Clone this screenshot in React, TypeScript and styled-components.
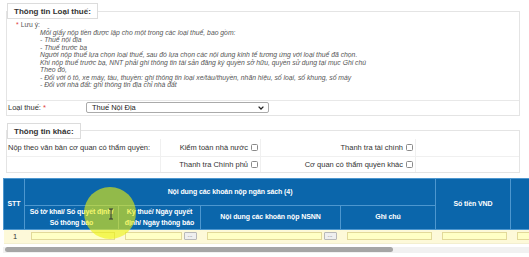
import React from "react";
import styled, { createGlobalStyle } from "styled-components";

const GlobalStyle = createGlobalStyle`
  html, body {
    margin: 0;
    padding: 0;
    background: #ffffff;
  }
  body {
    font-family: "Liberation Sans", Arial, sans-serif;
    color: #333;
  }
  * {
    box-sizing: border-box;
  }
`;

const Page = styled.div`
  position: relative;
  width: 529px;
  height: 257px;
  overflow: hidden;
  padding-top: 3px;
`;

const Fieldset = styled.fieldset<{ $top?: number }>`
  margin: ${(p) => p.$top ?? 0}px 9px 0 6px;
  padding: 0;
  border: 1px solid #e4e4e4;
  min-width: 0;
`;

const Legend = styled.legend`
  margin: 0;
  padding: 0 6px;
  height: 16px;
  line-height: 15px;
  border: 1px solid #dcdcdc;
  background: #fff;
  font-size: 8px;
  font-weight: bold;
  color: #333;
`;

const Note = styled.div`
  padding: 2px 0 11px 9px;
  font-size: 6.8px;
  line-height: 7.5px;
  color: #555;
`;

const Required = styled.span`
  color: #e04040;
  margin-right: 2px;
`;

const NoteList = styled.div`
  margin-left: 24px;
  font-style: italic;
`;

const TaxRow = styled.div`
  display: flex;
  align-items: center;
  height: 15px;
  border-top: 1px solid #e8e8e8;
  font-size: 7.5px;
  color: #333;
`;

const TaxLabel = styled.div`
  width: 79px;
  padding-left: 1px;
`;

const SelectBox = styled.div`
  display: flex;
  align-items: center;
  justify-content: space-between;
  width: 183px;
  height: 11px;
  padding: 0 4px 0 5px;
  border: 1px solid #aaa;
  border-radius: 2px;
  background: #fff;
  font-size: 7.5px;
  color: #222;
`;

const OtherGrid = styled.div`
  display: grid;
  grid-template-columns: 153px 100px 155px 1fr;
  grid-template-rows: 17px 16px;
  font-size: 7.5px;
  color: #333;
`;

const OtherCell = styled.div<{ $right?: boolean; $line?: boolean }>`
  display: flex;
  align-items: center;
  justify-content: ${(p) => (p.$right ? "flex-end" : "flex-start")};
  gap: 3px;
  padding: 0 2px 0 1px;
  border-top: ${(p) => (p.$line ? "1px solid #f0f0f0" : "none")};
  border-left: ${(p) => (p.$right ? "1px solid #f0f0f0" : "none")};
`;

const Check = styled.span`
  display: inline-block;
  width: 7px;
  height: 7px;
  border: 1px solid #8a8a8a;
  border-radius: 1.5px;
  background: #fff;
`;

const TableWrap = styled.div`
  margin: 5px 0 0 3px;
  width: 526px;
  overflow: hidden;
`;

const Table = styled.table`
  border-collapse: collapse;
  table-layout: fixed;
  width: 560px;
`;

const Th = styled.th<{ $h?: number }>`
  height: ${(p) => p.$h ?? 24}px;
  padding: 0;
  background: #0b66ab;
  border: 1px solid #4d97cf;
  color: #fff;
  font-size: 7px;
  letter-spacing: -0.1px;
  line-height: 11.5px;
  font-weight: bold;
  text-align: center;
  vertical-align: middle;
  white-space: nowrap;
`;

const Td = styled.td`
  height: 14px;
  padding: 0 4px 0 6px;
  background: #fdf9d9;
  border-bottom: 1px solid #f3efd0;
  font-size: 7.5px;
  text-align: center;
  vertical-align: middle;
`;

const CellInner = styled.div`
  display: flex;
  align-items: center;
  gap: 2px;
`;

const Field = styled.div`
  flex: 1;
  height: 8px;
  background: #ffffc6;
  border: 1px solid #e2d99a;
`;

const DotsButton = styled.div`
  width: 13px;
  height: 8px;
  border: 1px solid #b8b8b8;
  border-radius: 1px;
  background: #efefef;
  font-size: 6px;
  line-height: 4px;
  color: #555;
  text-align: center;
`;

const ScrollTrack = styled.div`
  margin: 3px 0 0 3px;
  height: 6px;
  background: #f1f1f1;
  padding: 0.5px 0 0 2px;
`;

const ScrollThumb = styled.div`
  width: 388px;
  height: 5px;
  border-radius: 3px;
  background: #a6a6a6;
`;

const CursorHalo = styled.div`
  position: absolute;
  left: 84px;
  top: 187px;
  width: 52px;
  height: 52px;
  border-radius: 50%;
  background: rgba(236, 242, 10, 0.6);
  pointer-events: none;
`;

const IBeam = styled.svg`
  position: absolute;
  left: 108px;
  top: 208px;
`;

const notes = [
  "Mỗi giấy nộp tiền được lập cho một trong các loại thuế, bao gồm:",
  "- Thuế nội địa",
  "- Thuế trước bạ",
  "Người nộp thuế lựa chọn loại thuế, sau đó lựa chọn các nội dung kinh tế tương ứng với loại thuế đã chọn.",
  "Khi nộp thuế trước bạ, NNT phải ghi thông tin tài sản đăng ký quyền sở hữu, quyền sử dụng tại mục Ghi chú",
  "Theo đó,",
  "- Đối với ô tô, xe máy, tàu, thuyền: ghi thông tin loại xe/tàu/thuyền, nhãn hiệu, số loại, số khung, số máy",
  "- Đối với nhà đất: ghi thông tin địa chỉ nhà đất",
];

const cols = [21, 94, 82, 140, 95, 75, 53];

const App = () => {
  return (
    <Page>
      <GlobalStyle />
      <Fieldset>
        <Legend>Thông tin Loại thuế:</Legend>
        <Note>
          <div>
            <Required>*</Required>Lưu ý:
          </div>
          <NoteList>
            {notes.map((n) => (
              <div key={n}>{n}</div>
            ))}
          </NoteList>
        </Note>
        <TaxRow>
          <TaxLabel>
            Loại thuế: <Required>*</Required>
          </TaxLabel>
          <SelectBox>
            <span>Thuế Nội Địa</span>
            <svg width="6" height="4" viewBox="0 0 6 4">
              <path d="M0.6 0.6 L3 3 L5.4 0.6" stroke="#222" strokeWidth="1.3" fill="none" />
            </svg>
          </SelectBox>
        </TaxRow>
      </Fieldset>

      <Fieldset $top={7}>
        <Legend>Thông tin khác:</Legend>
        <OtherGrid>
          <OtherCell>Nộp theo văn bản cơ quan có thẩm quyền:</OtherCell>
          <OtherCell $right>
            Kiểm toán nhà nước <Check />
          </OtherCell>
          <OtherCell $right>
            Thanh tra tài chính <Check />
          </OtherCell>
          <OtherCell $right />
          <OtherCell $line />
          <OtherCell $right $line>
            Thanh tra Chính phủ <Check />
          </OtherCell>
          <OtherCell $right $line>
            Cơ quan có thẩm quyền khác <Check />
          </OtherCell>
          <OtherCell $right $line />
        </OtherGrid>
      </Fieldset>

      <TableWrap>
        <Table>
          <colgroup>
            {cols.map((w, i) => (
              <col key={i} style={{ width: w }} />
            ))}
          </colgroup>
          <thead>
            <tr>
              <Th rowSpan={2}>STT</Th>
              <Th colSpan={4} $h={27}>
                Nội dung các khoản nộp ngân sách (4)
              </Th>
              <Th rowSpan={2}>Số tiền VND</Th>
              <Th rowSpan={2} />
            </tr>
            <tr>
              <Th>
                Số tờ khai/ Số quyết định/
                <br />
                Số thông báo
              </Th>
              <Th>
                Kỳ thuế/ Ngày quyết
                <br />
                định/ Ngày thông báo
              </Th>
              <Th>Nội dung các khoản nộp NSNN</Th>
              <Th>Ghi chú</Th>
            </tr>
          </thead>
          <tbody>
            <tr>
              <Td>1</Td>
              <Td>
                <CellInner>
                  <Field />
                </CellInner>
              </Td>
              <Td>
                <CellInner>
                  <Field />
                  <DotsButton>...</DotsButton>
                </CellInner>
              </Td>
              <Td>
                <CellInner>
                  <Field />
                  <DotsButton>...</DotsButton>
                </CellInner>
              </Td>
              <Td>
                <CellInner>
                  <Field />
                </CellInner>
              </Td>
              <Td>
                <CellInner>
                  <Field />
                </CellInner>
              </Td>
              <Td>
                <CellInner>
                  <Field />
                </CellInner>
              </Td>
            </tr>
          </tbody>
        </Table>
      </TableWrap>
      <ScrollTrack>
        <ScrollThumb />
      </ScrollTrack>

      <CursorHalo />
      <IBeam width="6" height="12" viewBox="0 0 6 12">
        <path d="M1 1 H5 M3 1 V11 M1 11 H5" stroke="#333" strokeWidth="1" fill="none" />
      </IBeam>
    </Page>
  );
};

export default App;
